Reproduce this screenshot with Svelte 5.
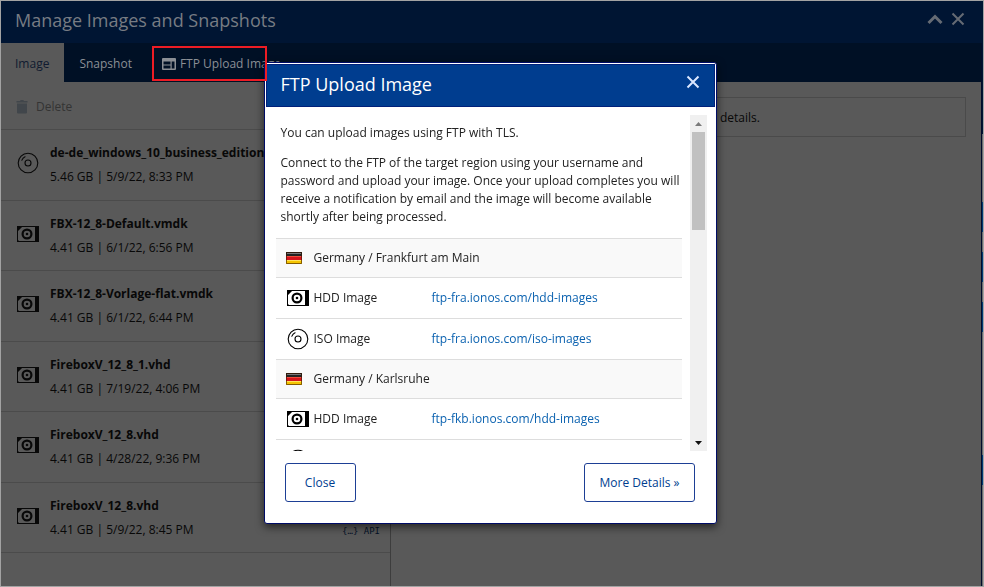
<script>
  const images = [
    { kind: 'iso', name: 'de-de_windows_10_business_editions', info: '5.46 GB | 5/9/22, 8:33 PM' },
    { kind: 'hdd', name: 'FBX-12_8-Default.vmdk', info: '4.41 GB | 6/1/22, 6:56 PM' },
    { kind: 'hdd', name: 'FBX-12_8-Vorlage-flat.vmdk', info: '4.41 GB | 6/1/22, 6:44 PM' },
    { kind: 'hdd', name: 'FireboxV_12_8_1.vhd', info: '4.41 GB | 7/19/22, 4:06 PM' },
    { kind: 'hdd', name: 'FireboxV_12_8.vhd', info: '4.41 GB | 4/28/22, 9:36 PM' },
    { kind: 'hdd', name: 'FireboxV_12_8.vhd', info: '4.41 GB | 5/9/22, 8:45 PM', api: true }
  ];
  const regions = [
    { name: 'Germany / Frankfurt am Main', host: 'ftp-fra.ionos.com' },
    { name: 'Germany / Karlsruhe', host: 'ftp-fkb.ionos.com' }
  ];
</script>

{#snippet typeIcon(kind)}
  {#if kind === 'iso'}
    <svg class="type" width="22" height="22" viewBox="0 0 22 22" fill="none" stroke="currentColor" aria-hidden="true">
      <circle cx="11" cy="11" r="9.8" stroke-width="1.1" />
      <circle cx="11" cy="11" r="3" stroke-width="1.1" />
      <path d="M4.600 8.600Q5.800 5.800 8.400 4.600" stroke-width="1.1" />
    </svg>
  {:else}
    <svg class="type" width="22" height="22" viewBox="0 0 22 22" aria-hidden="true">
      <path d="M0.5 3.5h21v15h-21z" fill="none" stroke="currentColor" />
      <path d="M0 3h6L0 9zM18 3h4v16h-4zM0 16l3 3H0z" fill="currentColor" />
      <circle cx="10" cy="11" r="4.4" fill="none" stroke="currentColor" stroke-width="2.2" />
      <circle cx="10" cy="11" r="1.3" fill="currentColor" />
    </svg>
  {/if}
{/snippet}

<div class="window">
  <header class="titlebar">
    <h1>Manage Images and Snapshots</h1>
    <button class="plain" aria-label="Collapse">
      <svg width="16" height="16" viewBox="0 0 16 16" fill="none" stroke="currentColor" stroke-width="3"><path d="M1.500 12L8 5.500 14.500 12" /></svg>
    </button>
    <button class="plain" aria-label="Close window">
      <svg width="14" height="14" viewBox="0 0 14 14" fill="none" stroke="currentColor" stroke-width="2"><path d="M1.500 1.500l11 11m0-11l-11 11" /></svg>
    </button>
  </header>
  <div class="frame">
    <nav class="tabs">
      <button class="tab active">Image</button>
      <button class="tab">Snapshot</button>
      <button class="tab">
        <svg width="14" height="12" viewBox="0 0 14 12" aria-hidden="true">
          <path d="M1 0h12q1 0 1 1v10q0 1-1 1H1q-1 0-1-1V1q0-1 1-1zM1.500 3.500v3h7v-3zM1.500 7.500v3h7v-3zM9.700 3.500v7h2.800v-7z" fill="currentColor" fill-rule="evenodd" />
        </svg>
        FTP Upload Image
      </button>
    </nav>
    <main class="columns">
      <section class="list">
        <div class="toolbar">
          <button class="delete">
            <svg width="12" height="14" viewBox="0 0 12 14" fill="currentColor" aria-hidden="true"><path d="M1 3.500h10v9q0 1-1 1H2q-1 0-1-1zM0.500 1H4l.7-1h2.600L8 1h3.500v1.600h-11z" /></svg>
            Delete
          </button>
        </div>
        <ul>
          {#each images as image}
            <li>
              {@render typeIcon(image.kind)}
              <div class="entry">
                <strong>{image.name}</strong>
                <span>{image.info}</span>
              </div>
              {#if image.api}<a class="api" href="#api">{'{…}'} API</a>{/if}
            </li>
          {/each}
        </ul>
      </section>
      <section class="detail">
        <p class="hint">details.</p>
      </section>
    </main>
  </div>
</div>

<div class="overlay">
  <div class="dialog" role="dialog" aria-modal="true" aria-labelledby="dialog-title">
    <header>
      <h2 id="dialog-title">FTP Upload Image</h2>
      <button class="plain" aria-label="Close dialog">
        <svg width="14" height="14" viewBox="0 0 14 14" fill="none" stroke="currentColor" stroke-width="2"><path d="M1.500 1.500l11 11m0-11l-11 11" /></svg>
      </button>
    </header>
    <div class="scroller">
      <div class="content">
        <p>You can upload images using FTP with TLS.</p>
        <p>Connect to the FTP of the target region using your username and password and upload your image. Once your upload completes you will receive a notification by email and the image will become available shortly after being processed.</p>
        <table>
          <tbody>
            {#each regions as region}
              <tr class="region">
                <th colspan="2">
                  <div class="cell">
                    <svg class="flag" width="16" height="12" viewBox="0 0 16 12" aria-hidden="true">
                      <path fill="#222" d="M0 0h16v4H0z" /><path fill="#777" d="M1 1h14v1H1z" />
                      <path fill="#d4141c" d="M0 4h16v4H0z" /><path fill="#f04a38" d="M1 4h14v1H1z" />
                      <path fill="#f5c400" d="M0 8h16v4H0z" /><path fill="#ffe45c" d="M1 8h14v1H1z" />
                      <path d="M0.500 0.500h15v11h-15z" fill="none" stroke="#3a1800" stroke-opacity="0.600" />
                    </svg>
                    {region.name}
                  </div>
                </th>
              </tr>
              {#each ['hdd', 'iso'] as kind}
                <tr>
                  <td class="kind"><div class="cell">{@render typeIcon(kind)}{kind.toUpperCase()} Image</div></td>
                  <td><a href="ftp://{region.host}/{kind}-images">{region.host}/{kind}-images</a></td>
                </tr>
              {/each}
            {/each}
          </tbody>
        </table>
      </div>
      <div class="scrollbar" aria-hidden="true">
        <svg width="17" height="17" viewBox="0 0 17 17"><path d="M5 11l3.500-4 3.500 4z" fill="#7a7a7a" /></svg>
        <div class="thumb"></div>
        <svg width="17" height="17" viewBox="0 0 17 17"><path d="M5 7l3.500 4 3.500-4z" fill="#111" /></svg>
      </div>
    </div>
    <footer>
      <button>Close</button>
      <button>More Details »</button>
    </footer>
  </div>
</div>
<div class="marker"></div>

<style>
  :global(body) {
    font: 12px/18px "Open Sans", "Noto Sans", sans-serif;
    background: #595959;
  }
  h1, h2, p, ul { margin: 0; padding: 0; font-weight: 400; }
  button { font: inherit; cursor: pointer; }
  svg { flex: none; display: block; }
  .plain { padding: 0; border: 0; background: none; color: inherit; }

  .window {
    box-sizing: border-box;
    min-height: 100vh;
    display: flex;
    flex-direction: column;
    border: 1px solid #a3a3a3;
    /* Sliver of the page behind the window, along its right edge */
    background: linear-gradient(#001533 133px, #6b6b6b 133px, #6b6b6b 201px, #003a73 201px, #003a73 231px, #6b6b6b 231px, #6b6b6b 251px, #003a73 251px, #003a73 281px, #6b6b6b 281px, #6b6b6b 301px, #003a73 301px, #003a73 331px, #6b6b6b 331px, #6b6b6b 454px, #003a73 454px, #003a73 484px, #6b6b6b 484px);
    color: #080808;
  }
  .titlebar {
    display: flex;
    align-items: center;
    gap: 8px;
    height: 42px;
    padding: 0 18px 0 14px;
    background: #001533;
    color: #777c83;
  }
  .titlebar h1 { flex: 1; font-size: 18px; line-height: 26px; padding-bottom: 4px; }
  .titlebar .plain { padding-bottom: 6px; color: #656b74; }
  .frame {
    flex: 1;
    display: flex;
    flex-direction: column;
    margin-right: 1px;
    border-right: 1px solid #000c2b;
    background: #595959;
  }
  .tabs { display: flex; height: 39px; background: #001025; }
  .tab {
    display: flex;
    align-items: center;
    gap: 4px;
    padding: 2px 15px 0;
    border: 0;
    background: none;
    color: #8b8f95;
  }
  .tab.active { padding-left: 14px; background: #595959; color: #101b30; }
  .columns { flex: 1; display: flex; }
  .list {
    box-sizing: border-box;
    flex: 0 0 390px;
    border-right: 1px solid #3d3d3d;
  }
  .toolbar {
    display: flex;
    height: 47px;
    border-bottom: 1px solid #4b4b4b;
  }
  .delete {
    display: flex;
    align-items: center;
    gap: 8px;
    padding: 2px 15px 0;
    border: 0;
    background: none;
    color: #343434;
  }
  .delete svg { color: #41464b; }
  ul { list-style: none; }
  li {
    display: flex;
    align-items: center;
    gap: 11px;
    height: 70px;
    padding: 0 10px 0 16px;
    border-bottom: 1px solid #4b4b4b;
  }
  li:nth-child(even) { height: 69px; }
  li .type { margin-bottom: 4px; }
  .entry { flex: 1; min-width: 0; display: flex; flex-direction: column; gap: 6px; }
  .entry strong { overflow: hidden; white-space: nowrap; }
  .api {
    align-self: flex-end;
    padding-bottom: 13px;
    font: 9px/16px "DejaVu Sans Mono", monospace;
    color: #041228;
    text-decoration: none;
  }
  .detail { flex: 1; padding: 15px 15px 15px 14px; }
  .hint { padding: 11px 16px 9px 314px; border: 1px solid #4a4a4a; }

  .overlay {
    position: fixed;
    inset: 0;
    display: flex;
    align-items: center;
    justify-content: center;
    padding: 0 4px 2px 0;
  }
  .dialog {
    box-sizing: border-box;
    width: 453px;
    max-width: 100%;
    padding: 1px;
    border: 1px solid #000c66;
    border-radius: 3px;
    background: #fff;
    color: #222;
    box-shadow: 0 3px 8px rgba(0, 0, 0, 0.6);
  }
  .dialog header {
    display: flex;
    align-items: center;
    justify-content: space-between;
    height: 41px;
    padding: 0 14px;
    border: 1px solid #00207a;
    background: #003d8f;
    color: #fff;
  }
  .dialog h2 { font-size: 18px; line-height: 26px; padding-bottom: 2px; }
  .dialog header .plain { padding-bottom: 6px; color: #dbe7ff; }
  .scroller { display: flex; gap: 8px; height: 336px; padding: 8px 8px 0 10px; }
  .content { flex: 1; min-width: 0; overflow: hidden; }
  .content p { padding: 0 0 12px 5px; }
  .content p:first-child { padding-top: 9px; }
  table { width: 100%; border-collapse: collapse; }
  tr { height: 41px; border-bottom: 1px solid #ddd; }
  tr.region { height: 39px; background: #f9f9f9; border-top: 1px solid #ddd; }
  th, td { padding: 0; text-align: left; font-weight: 400; }
  .kind { width: 156px; }
  .cell { display: flex; align-items: center; gap: 5px; padding-left: 11px; }
  .cell .type { color: #000; }
  th .cell { gap: 12px; padding-left: 10px; }
  a { color: #0b62b0; text-decoration: none; }
  .scrollbar { display: flex; flex-direction: column; flex: 0 0 17px; background: #f0f0f0; }
  .thumb { flex: 0 0 98px; margin: 0 2px auto; background: #c1c1c1; }
  footer { display: flex; justify-content: space-between; padding: 12px 20px 20px 19px; }
  footer button {
    height: 39px;
    padding: 2px 14px 0;
    min-width: 71px;
    border: 1px solid #1d3f95;
    border-radius: 3px;
    background: #fff;
    color: #003d8f;
  }
  /* Highlight frame around the upload tab */
  .marker {
    position: absolute;
    left: 152px;
    top: 46px;
    box-sizing: border-box;
    width: 115px;
    height: 35px;
    border: 2px solid #ed1c24;
    pointer-events: none;
  }
</style>
